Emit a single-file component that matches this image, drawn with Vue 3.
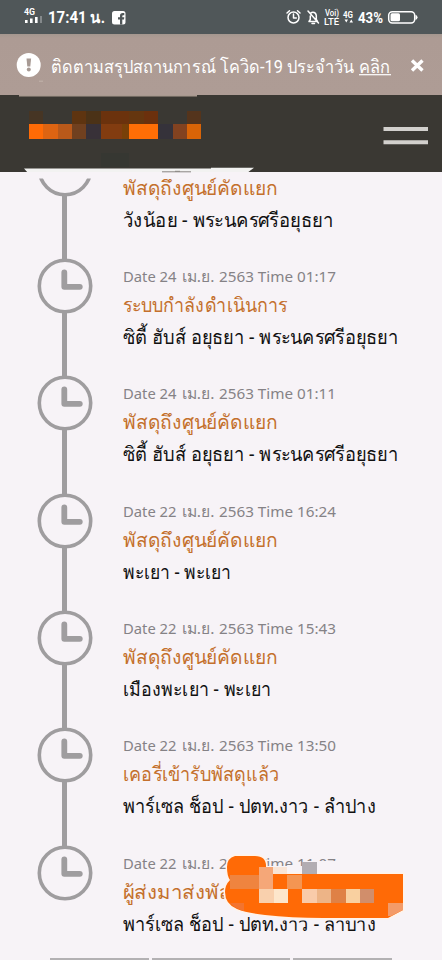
<script setup>
const SORTED = 'พัสดุถึงศูนย์คัดแยก'
const items = [
  { day: 'Date 24', time: '2563 Time 03:52', status: SORTED, sw: 155, place: 'วังน้อย - พระนครศรีอยุธยา', pw: 210 },
  { day: 'Date 24', time: '2563 Time 01:17', status: 'ระบบกำลังดำเนินการ', sw: 164, place: 'ซิตี้ ฮับส์ อยุธยา - พระนครศรีอยุธยา', pw: 275 },
  { day: 'Date 24', time: '2563 Time 01:11', status: SORTED, sw: 155, place: 'ซิตี้ ฮับส์ อยุธยา - พระนครศรีอยุธยา', pw: 275 },
  { day: 'Date 22', time: '2563 Time 16:24', status: SORTED, sw: 155, place: 'พะเยา - พะเยา', pw: 108 },
  { day: 'Date 22', time: '2563 Time 15:43', status: SORTED, sw: 155, place: 'เมืองพะเยา - พะเยา', pw: 148 },
  { day: 'Date 22', time: '2563 Time 13:50', status: 'เคอรี่เข้ารับพัสดุแล้ว', sw: 156, place: 'พาร์เซล ช็อป - ปตท.งาว - ลำปาง', pw: 253 },
  { day: 'Date 22', time: '2563 Time 11:07', status: 'ผู้ส่งมาส่งพัสดุ', sw: 122, place: 'พาร์เซล ช็อป - ปตท.งาว - ลำปาง', pw: 253 },
]
const logo = [
  [29, 111, 14, 14, '#463524'], [72, 111, 14, 14, '#5e3410'], [86, 111, 15, 14, '#4b3217'],
  [101, 111, 28, 14, '#6b320d'], [129, 111, 15, 14, '#65360f'], [144, 111, 14, 14, '#6b300d'], [187, 111, 14, 14, '#54341c'],
  [29, 124, 14, 15, '#ff6b06'], [43, 124, 15, 15, '#dd6412'], [58, 124, 14, 15, '#b9591a'], [72, 124, 14, 15, '#70401f'],
  [86, 124, 15, 15, '#383138'], [101, 124, 21, 15, '#823c10'], [122, 124, 7, 15, '#784008'], [129, 124, 29, 15, '#ff6e06'],
  [158, 124, 15, 15, '#35323a'], [173, 124, 14, 15, '#824220'], [187, 124, 14, 15, '#d96407'],
  [101, 153, 28, 14, '#363732'],
]
const patch = [
  [30, 27, 29, 14, '#ef843f'], [59, 19, 14, 22, '#f5a778'], [73, 19, 14, 7, '#f9e4d5'], [87, 27, 15, 14, '#f49552'],
  [102, 14, 15, 12, '#b2adb2'], [59, 41, 15, 14, '#f9d0ad'], [74, 41, 14, 14, '#fde6cb'],
  [102, 41, 15, 14, '#f9cbaa'], [117, 41, 14, 14, '#edb487'], [131, 41, 15, 14, '#df8146'], [146, 41, 14, 14, '#f9d0a0'],
  [160, 41, 14, 14, '#d18e6b'],
]
</script>

<template>
  <main class="screen">
    <header class="status">
      <svg width="442" height="34" viewBox="0 0 442 34">
        <g fill="#fff">
          <text x="24" y="15" class="tiny" textLength="11" lengthAdjust="spacingAndGlyphs">4G</text>
          <path d="M25 20h2.6v3H25zM30 18.5h2.6V23H30zM35 17h2.6v6H35z" />
          <path d="M40 16h2v7h-2z" opacity=".3" />
          <text x="48" y="23.3" class="clock" textLength="57" lengthAdjust="spacingAndGlyphs">17:41 น.</text>
          <rect x="112" y="11" width="13.5" height="13.5" rx="2.5" />
          <path d="M120 24.5v-5h-2v-2.3h2v-1.4q0-2.8 2.8-2.8h1.5v2.2h-1.2q-.8 0-.8.9v1.1h2l-.3 2.3h-1.7v5z" fill="#505759" />
        </g>
        <g fill="none" stroke="#fff" stroke-width="1.5" stroke-linecap="round" stroke-linejoin="round">
          <circle cx="293.5" cy="17.5" r="5.5" />
          <path d="M293.5 14v4h2.8M287 13l2.5-2.3M300 13l-2.5-2.3" />
          <path d="M309.5 21.5h8l-1.2-2v-4q-.5-3.2-3.3-3.2-1.4 0-2.4 1.2M310.3 16v3.5l-1.3 2M308 11l10.5 12M312 23.6h2.5" />
        </g>
        <g fill="#fff">
          <text x="325" y="16" class="lte" textLength="14" lengthAdjust="spacingAndGlyphs">Voi)</text>
          <text x="324" y="25" class="lte" textLength="15" lengthAdjust="spacingAndGlyphs">LTE</text>
          <text x="343" y="17.5" class="tiny" textLength="10" lengthAdjust="spacingAndGlyphs">4G</text>
          <path d="M344.5 19.5h3.5l-1.7 3zM349.5 22.5h3.5l-1.7-3z" />
          <text x="358" y="22.8" class="pct" textLength="25" lengthAdjust="spacingAndGlyphs">43%</text>
          <rect x="390.5" y="13.3" width="9.5" height="8" rx="1.5" />
          <path d="M415.5 14.7q2 .5 2 2.6t-2 2.6z" />
        </g>
        <rect x="388.7" y="11.7" width="26" height="11.2" rx="3.6" fill="none" stroke="#fff" stroke-width="1.5" />
      </svg>
    </header>

    <section class="banner">
      <svg width="442" height="61" viewBox="0 34 442 61">
        <circle cx="28.7" cy="65" r="12" fill="#fff" />
        <path d="M26.5 58.5h4.6l-.8 8h-3z" fill="#a79a94" />
        <circle cx="28.8" cy="69.5" r="2" fill="#a79a94" />
        <g class="notice" fill="#fff">
          <text x="51" y="72.5" textLength="303" lengthAdjust="spacingAndGlyphs">ติดตามสรุปสถานการณ์ โควิด-19 ประจำวัน</text>
          <text x="359" y="72.5" textLength="31" lengthAdjust="spacingAndGlyphs">คลิก</text>
        </g>
        <path d="M359 74.7h32" stroke="#fff" stroke-width="1.2" />
        <path d="M412 60.5l10.5 10M422.5 60.5l-10.5 10" stroke="#fff" stroke-width="3.4" />
        <path d="M39 81.2h4" stroke="#c2b4ac" />
      </svg>
    </section>

    <nav class="nav">
      <svg width="442" height="84" viewBox="0 95 442 84">
        <path d="M0 95h442v77H0z" fill="#3a3833" />
        <path d="M19 94h178v2.5H19z" fill="#a99a90" />
        <g shape-rendering="crispEdges">
          <rect v-for="(c, i) in logo" :key="i" :x="c[0]" :y="c[1]" :width="c[2]" :height="c[3]" :fill="c[4]" />
        </g>
        <path d="M383.5 129h44.5M383.5 142.3h44.5" stroke="#d2d0cd" stroke-width="4" />
        <path d="M24 168.5h187v-.7h43l-7 5.2H28z" fill="#f2f2f1" />
        <path d="M28 172h72v6.5H33z" fill="#f7f3f7" />
        <path d="M28 172.5h414" stroke="#f7f3f7" />
        <path d="M162 171.8h29M175 171.3h5" stroke="#8a8783" />
      </svg>
    </nav>

    <ol class="timeline">
      <li v-for="(item, i) in items" :key="i" class="item">
        <div class="rail">
          <svg class="dial" width="56" height="56" viewBox="0 0 56 56">
            <circle cx="28" cy="28" r="25.7" fill="none" stroke="#9f9d9f" stroke-width="3.6" />
            <path d="M27.3 14.5v14.3h15.5" fill="none" stroke="#9f9d9f" stroke-width="5.8" stroke-linecap="round" stroke-linejoin="round" />
          </svg>
          <i v-if="i < items.length - 1" class="line"></i>
        </div>
        <svg class="info" width="300" height="110" viewBox="0 0 300 110">
          <g class="date">
            <text y="24.3" textLength="53.5" lengthAdjust="spacingAndGlyphs">{{ item.day }}</text>
            <text x="58.5" y="24.3" textLength="33" lengthAdjust="spacingAndGlyphs">เม.ย.</text>
            <text x="96" y="24.3" textLength="117" lengthAdjust="spacingAndGlyphs">{{ item.time }}</text>
          </g>
          <text class="state" y="54" :textLength="item.sw" lengthAdjust="spacingAndGlyphs">{{ item.status }}</text>
          <text class="place" y="86" :textLength="item.pw" lengthAdjust="spacingAndGlyphs">{{ item.place }}</text>
        </svg>
      </li>
      <li class="patch">
        <svg width="210" height="80" viewBox="0 0 210 80">
          <path d="M65 18h38v-5h80v14H65zM60 60h110v12.5H80z" fill="#f7f3f7" />
          <path d="M35 8q-8 2-8 11 0 9 3 13-5 5-5 12 0 12 12 17 10 4 28 6 26 3 58 3h65l15-8V26H66V18q0-10-11-10z" fill="#ff6a06" stroke="#fff3e9" stroke-width="3" paint-order="stroke" />
          <g shape-rendering="crispEdges">
            <rect v-for="(c, i) in patch" :key="i" :x="c[0]" :y="c[1]" :width="c[2]" :height="c[3]" :fill="c[4]" />
          </g>
          <path d="M30 55h14v8q-8-2-14-8z" fill="#f3742f" />
          <path d="M188 55h15v7l-12 6h-3z" fill="#f39b69" />
        </svg>
      </li>
    </ol>

    <footer class="tabs"><i></i><i class="wide"></i><i></i></footer>
  </main>
</template>

<style>
body { background: #f7f3f7; }
</style>

<style scoped>
.screen { width: 442px; height: 960px; overflow: hidden; display: flex; flex-direction: column; background: #f7f3f7; font-family: "Noto Sans", Roboto, sans-serif; }
svg { display: block; }
.status { height: 34px; background: #505759; }
.banner { height: 61px; background: linear-gradient(#a4978f, #ad9b94 4px, #ae9c95); }
.nav { height: 78px; flex: none; position: relative; z-index: 1; }
.status, .banner { flex: none; }
.tiny { font: 700 8.5px Roboto, sans-serif; }
.lte { font: 500 9px Roboto, sans-serif; }
.clock { font: 700 16px Roboto, sans-serif; }
.pct { font: 700 14px Roboto, sans-serif; }
.notice { font: 18px Roboto, sans-serif; }
.timeline { list-style: none; margin: -32.5px 0 0; padding: 0; position: relative; height: 819px; flex: none; }
.item { display: flex; height: 117.4px; gap: 30.5px; padding-left: 36.5px; }
.rail { width: 56px; display: flex; flex-direction: column; align-items: center; }
.dial { flex: none; }
.line { width: 5px; flex: 1; background: #9f9d9f; margin: -1px 0; }
.info { overflow: visible; }
.date { font: 15.3px "Noto Sans", sans-serif; fill: #858286; }
.state { font: 19.5px "Noto Sans", sans-serif; fill: #c4702c; }
.place { font: 19.5px "Noto Sans", sans-serif; fill: #111; }
.patch { position: absolute; left: 200px; top: 707.5px; }
.tabs { display: flex; gap: 3px; margin-top: -1.5px; padding: 0 50px; height: 3px; position: relative; }
.tabs i { flex: 0 0 99px; background: #b3b1b3; }
.tabs .wide { flex-basis: 138px; }
</style>
